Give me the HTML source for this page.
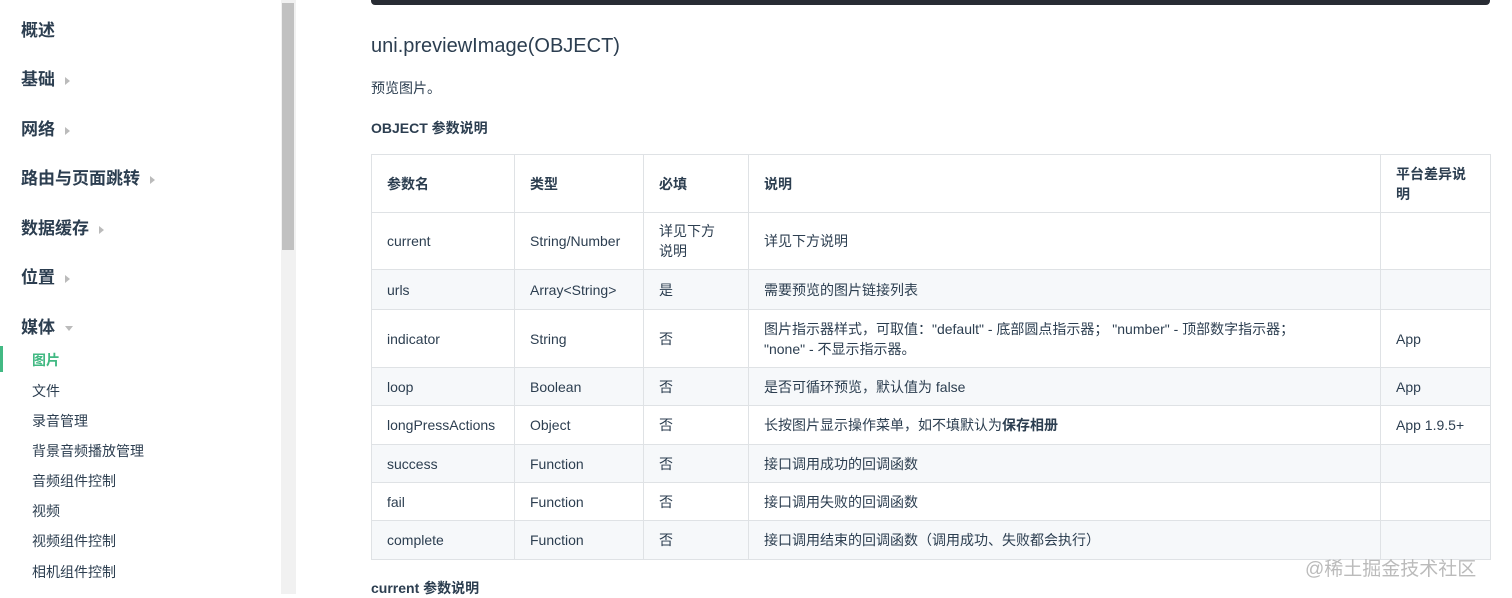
<!DOCTYPE html>
<html><head><meta charset="utf-8"><style>
body{margin:0;width:1512px;height:594px;overflow:hidden;background:#fff;font-family:"Liberation Sans","Noto Sans CJK SC",sans-serif;color:#2c3e50;position:relative}
.a{position:absolute;white-space:nowrap}
.h{font-size:17px;font-weight:bold;color:#2c3e50}
.s{font-size:14px;color:#2c3e50}
.ar{display:inline-block;width:0;height:0;border-left:5px solid #bbb;border-top:4px solid transparent;border-bottom:4px solid transparent;margin-left:10px;vertical-align:middle}
.ad{display:inline-block;width:0;height:0;border-top:5px solid #bbb;border-left:4px solid transparent;border-right:4px solid transparent;margin-left:10px;vertical-align:middle}
table{position:absolute;left:371px;top:154px;border-collapse:collapse;font-size:14px;color:#2c3e50;table-layout:fixed;width:1119px}
td,th{border:1px solid #dfe2e5;padding:0 15px;text-align:left;vertical-align:middle;line-height:20px}
th{font-weight:bold}
tr.g td{background:#f6f8fa}
</style></head><body>
<div class="a" style="left:281px;top:0;width:15px;height:594px;background:#f1f1f1"></div>
<div class="a" style="left:282px;top:3px;width:12px;height:247px;background:#c1c1c1"></div>
<div class="a h" style="left:21px;top:16px">概述</div>
<div class="a h" style="left:21px;top:65px">基础<span class="ar"></span></div>
<div class="a h" style="left:21px;top:115px">网络<span class="ar"></span></div>
<div class="a h" style="left:21px;top:164px">路由与页面跳转<span class="ar"></span></div>
<div class="a h" style="left:21px;top:214px">数据缓存<span class="ar"></span></div>
<div class="a h" style="left:21px;top:263px">位置<span class="ar"></span></div>
<div class="a h" style="left:21px;top:313px">媒体<span class="ad"></span></div>
<div class="a" style="left:0;top:346px;width:3px;height:26px;background:#42b983"></div>
<div class="a s" style="left:32px;top:350px;color:#42b983;font-weight:bold">图片</div>
<div class="a s" style="left:32px;top:381px">文件</div>
<div class="a s" style="left:32px;top:411px">录音管理</div>
<div class="a s" style="left:32px;top:441px">背景音频播放管理</div>
<div class="a s" style="left:32px;top:471px">音频组件控制</div>
<div class="a s" style="left:32px;top:501px">视频</div>
<div class="a s" style="left:32px;top:531px">视频组件控制</div>
<div class="a s" style="left:32px;top:562px">相机组件控制</div>

<div class="a" style="left:371px;top:0;width:1119px;height:5px;background:#282c34;border-radius:0 0 4px 4px"></div>
<div class="a" style="left:371px;top:35px;font-size:20px">uni.previewImage(OBJECT)</div>
<div class="a" style="left:371px;top:78px;font-size:14px">预览图片。</div>
<div class="a" style="left:371px;top:118px;font-size:14px;font-weight:bold">OBJECT 参数说明</div>
<table>
<colgroup><col style="width:143px"><col style="width:129px"><col style="width:105px"><col style="width:632px"><col style="width:110px"></colgroup>
<tr style="height:58px"><th>参数名</th><th>类型</th><th>必填</th><th>说明</th><th>平台差异说<br>明</th></tr>
<tr style="height:57px"><td>current</td><td>String/Number</td><td>详见下方<br>说明</td><td>详见下方说明</td><td></td></tr>
<tr class="g" style="height:40px"><td>urls</td><td>Array&lt;String&gt;</td><td>是</td><td>需要预览的图片链接列表</td><td></td></tr>
<tr style="height:58px"><td>indicator</td><td>String</td><td>否</td><td>图片指示器样式，可取值："default" - 底部圆点指示器； "number" - 顶部数字指示器；<br>"none" - 不显示指示器。</td><td>App</td></tr>
<tr class="g" style="height:38px"><td>loop</td><td>Boolean</td><td>否</td><td>是否可循环预览，默认值为 false</td><td>App</td></tr>
<tr style="height:39px"><td>longPressActions</td><td>Object</td><td>否</td><td>长按图片显示操作菜单，如不填默认为<b>保存相册</b></td><td>App 1.9.5+</td></tr>
<tr class="g" style="height:38px"><td>success</td><td>Function</td><td>否</td><td>接口调用成功的回调函数</td><td></td></tr>
<tr style="height:38px"><td>fail</td><td>Function</td><td>否</td><td>接口调用失败的回调函数</td><td></td></tr>
<tr class="g" style="height:39px"><td>complete</td><td>Function</td><td>否</td><td>接口调用结束的回调函数（调用成功、失败都会执行）</td><td></td></tr>
</table>
<div class="a" style="left:371px;top:578px;font-size:14px;font-weight:bold">current 参数说明</div>
<div class="a" style="left:1305px;top:554px;font-size:19px;color:#bbb">@稀土掘金技术社区</div>
</body></html>
